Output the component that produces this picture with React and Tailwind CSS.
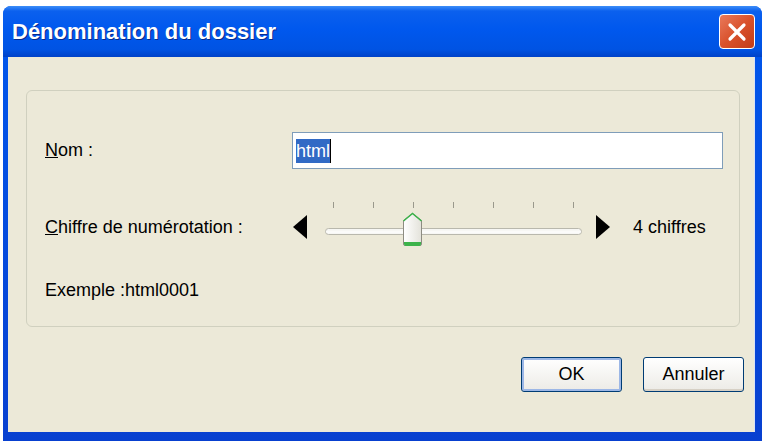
import React from "react";

const font = { fontFamily: '"Liberation Sans", Arial, sans-serif' };

const Slider = () => (
  <svg width="320" height="56" viewBox="0 0 320 56" className="shrink-0">
    <defs>
      <linearGradient id="thumb" x1="0" y1="0" x2="1" y2="0">
        <stop offset="0" stopColor="#ffffff" />
        <stop offset="1" stopColor="#e3e2da" />
      </linearGradient>
    </defs>
    <polygon points="1,28 15,16 15,40" fill="#000" />
    <polygon points="304,16 318,28 304,40" fill="#000" />
    <rect x="33.5" y="29.5" width="256" height="6" rx="3" fill="#f7f7f4" stroke="#b9b8ad" />
    <line x1="34" y1="33" x2="289" y2="33" stroke="#ffffff" />
    {[41, 81, 121, 161, 201, 241, 281].map((x) => (
      <line key={x} x1={x + 0.5} y1="3" x2={x + 0.5} y2="9" stroke="#9a998c" />
    ))}
    <path
      d="M111.5 21.5 L120.5 14.5 L129.5 21.5 L129.5 45 Q129.5 46.5 128 46.5 L113 46.5 Q111.5 46.5 111.5 45 Z"
      fill="url(#thumb)"
      stroke="#8d8c82"
    />
    <path d="M111.5 22 L120.5 14.5 L129.5 22" fill="none" stroke="#3cb34a" strokeWidth="1.5" />
    <path d="M112 43 L129 43 L129 45 Q129 47 127 47 L114 47 Q112 47 112 45 Z" fill="#3cb34a" />
  </svg>
);

const Btn = ({ label, focused }) => (
  <button
    className={
      focused
        ? "w-[101px] h-[35px] rounded-[3px] border border-[#003c74] bg-gradient-to-b from-[#ffffff] to-[#ecebe6] shadow-[inset_0_0_0_2px_#9cb7e6] text-[18px] text-black"
        : "w-[101px] h-[35px] rounded-[3px] border border-[#003c74] bg-gradient-to-b from-[#ffffff] to-[#ecebe6] shadow-[inset_0_-2px_0_#d6d0c5] text-[18px] text-black"
    }
    style={font}
  >
    {label}
  </button>
);

export default function App() {
  return (
    <div className="w-[764px] h-[442px] bg-white pt-[6px] pl-[3px]" style={font}>
      <div className="w-[759px] h-[435px] flex flex-col rounded-t-[8px] overflow-hidden bg-gradient-to-b from-[#0058ee] to-[#0840d0]">
        <div className="h-[51px] flex items-center justify-between pl-[9px] pr-[7px] bg-[linear-gradient(to_bottom,#3d8ef8_0%,#0b60ee_10%,#0058ee_45%,#0053e3_85%,#0042c8_100%)]">
          <span className="text-white font-bold text-[22px] [text-shadow:1px_1px_0_#0a2a8a]">
            Dénomination du dossier
          </span>
          <div className="w-[36px] h-[35px] rounded-[4px] border border-white bg-gradient-to-br from-[#e9795a] via-[#d9512b] to-[#c23c17] flex items-center justify-center">
            <svg width="22" height="22" viewBox="0 0 22 22">
              <path d="M4 4 L18 18 M18 4 L4 18" stroke="#fff" strokeWidth="3.2" strokeLinecap="round" />
            </svg>
          </div>
        </div>
        <div className="flex-1 flex pl-[5px] pr-[7px] pb-[9px]">
          <div className="flex-1 bg-[#ece9d8] border-r border-[#d8e2f5] flex flex-col pt-[33px] pl-[18px] pr-[14px]">
            <div className="h-[237px] border border-[#d0d0bf] rounded-[6px] flex flex-col pt-[41px] pl-[18px] pr-[16px]">
              <div className="h-[37px] flex items-center">
                <span className="w-[247px] text-[18px] text-black">
                  <span className="underline">N</span>om :
                </span>
                <div className="flex-1 h-[37px] bg-white border border-[#7f9db9] flex items-center pl-[3px]">
                  <span className="bg-[#316ac5] text-white text-[18px] leading-[24px]">html</span>
                  <span className="w-[1px] h-[24px] bg-black" />
                </div>
              </div>
              <div className="h-[56px] mt-[30px] flex items-center">
                <span className="w-[247px] text-[18px] text-black">
                  <span className="underline">C</span>hiffre de numérotation :
                </span>
                <Slider />
                <span className="ml-[21px] text-[18px] text-black">4 chiffres</span>
              </div>
              <div className="mt-[24px] text-[18px] text-black leading-[22px]">Exemple :html0001</div>
            </div>
            <div className="mt-[30px] -mr-[4px] flex justify-end gap-[21px]">
              <Btn label="OK" focused />
              <Btn label="Annuler" />
            </div>
          </div>
        </div>
      </div>
    </div>
  );
}
